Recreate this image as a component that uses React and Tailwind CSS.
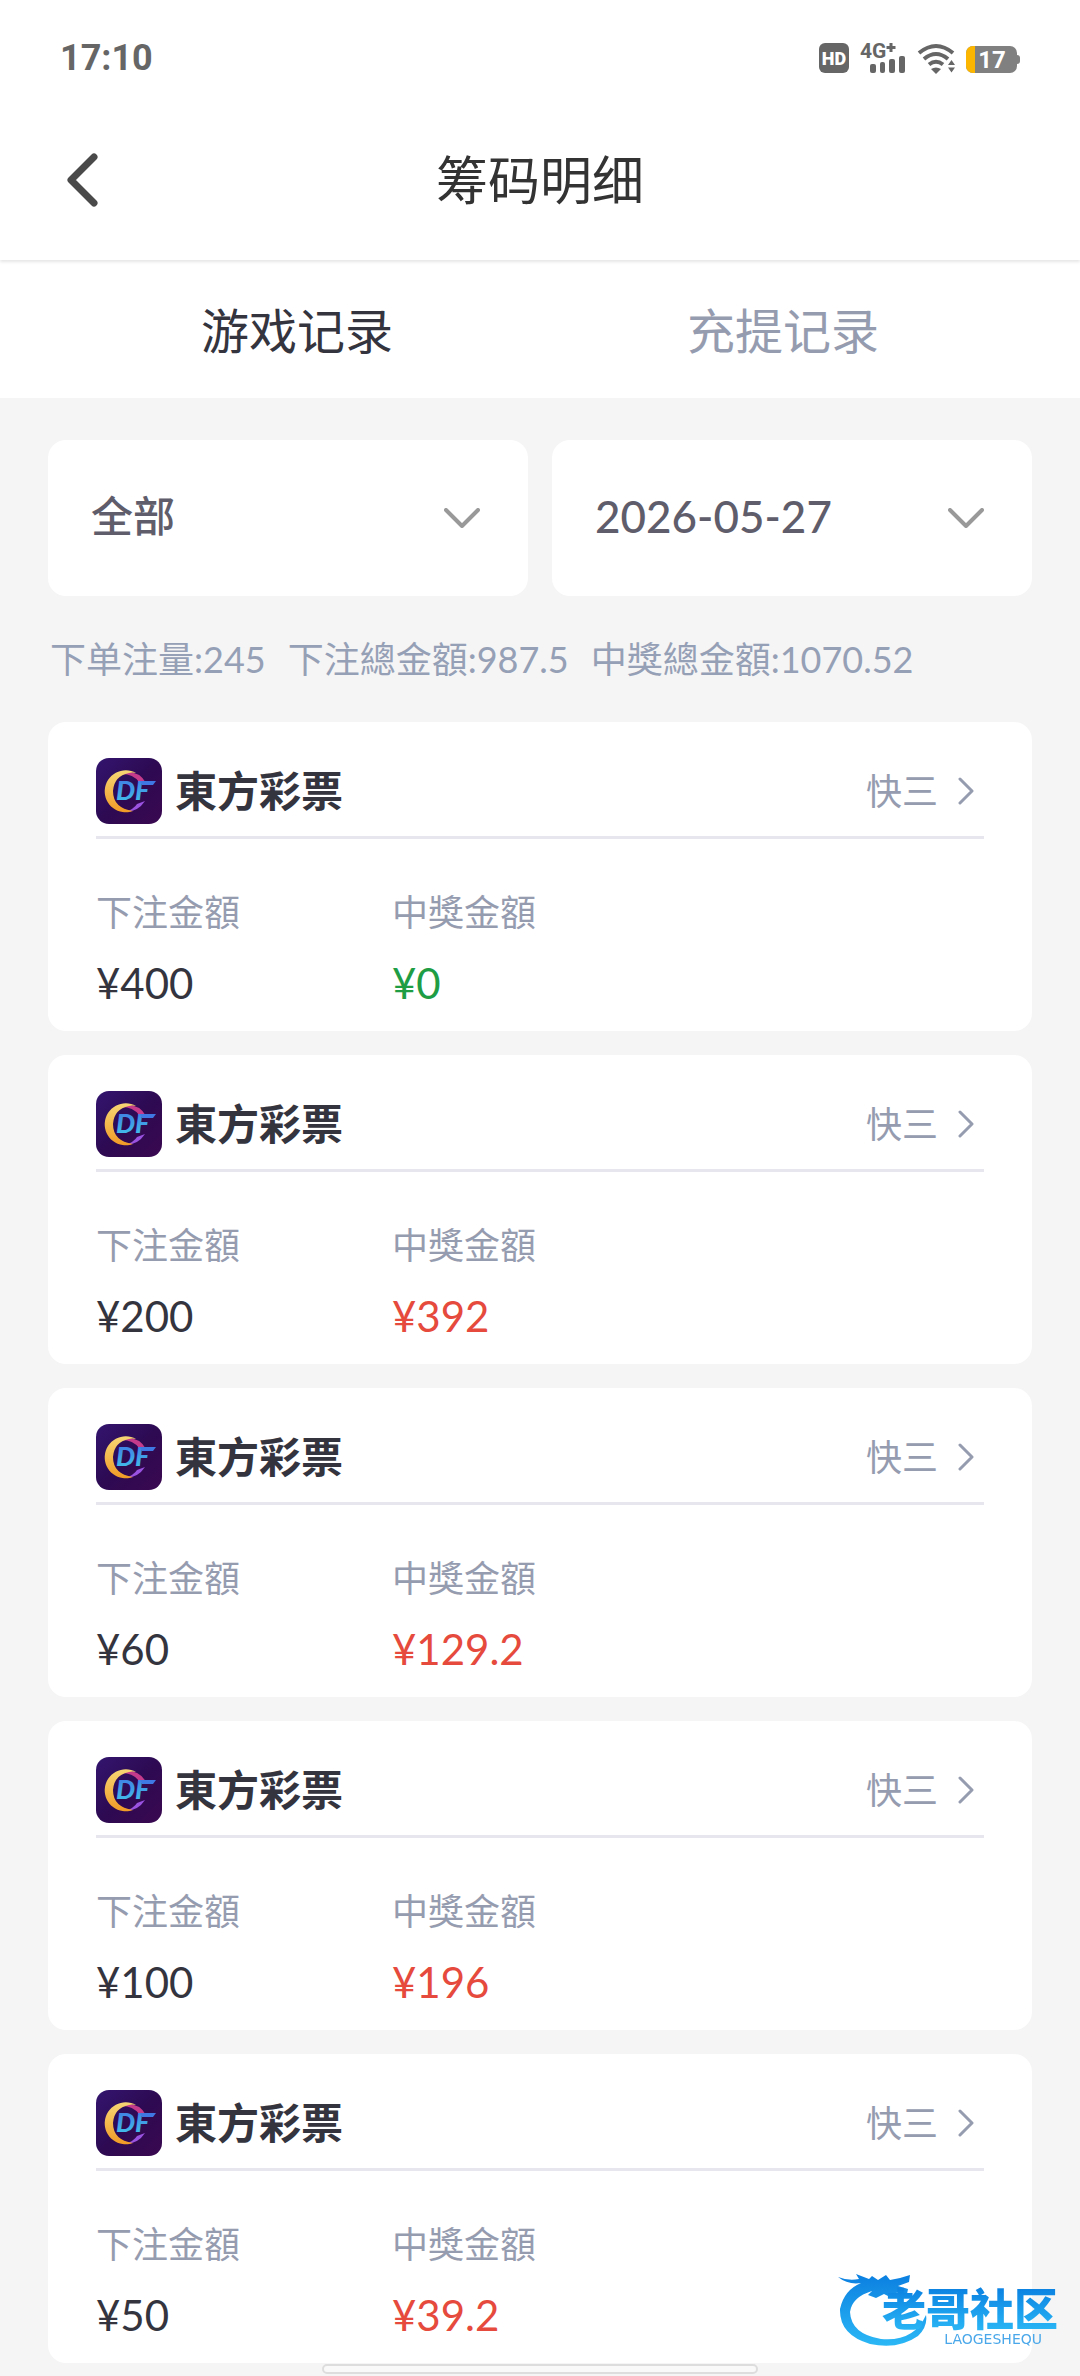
import { useState } from "react";

const records = [
  { id: 1, bet: "¥400", win: "¥0", won: false },
  { id: 2, bet: "¥200", win: "¥392", won: true },
  { id: 3, bet: "¥60", win: "¥129.2", won: true },
  { id: 4, bet: "¥100", win: "¥196", won: true },
  { id: 5, bet: "¥50", win: "¥39.2", won: true },
];

const tabs = ["游戏记录", "充提记录"];

const StatusBar = () => (
  <div className="flex h-[100px] items-center justify-between pt-4 pr-[60px] pl-[60px]">
    <span className="font-['Roboto',sans-serif] text-4xl leading-none font-bold text-[#666]">17:10</span>
    <svg className="h-8 w-[202px] overflow-visible" viewBox="0 0 202 32" fill="#666">
      <rect x="1" y="1" width="30" height="30" rx="6" />
      <text x="16" y="23" fill="#fff" fontSize="18" fontWeight="900" textAnchor="middle" fontFamily="Roboto, sans-serif">
        HD
      </text>
      <text x="42" y="16" fontSize="21" fontWeight="700" fontFamily="Roboto, sans-serif">
        4G
      </text>
      <path d="M73 1v9M68.500 5.500h9" stroke="#666" strokeWidth="3" />
      <rect x="52" y="22" width="6" height="9" rx="2" />
      <rect x="62" y="20" width="5" height="11" rx="2" />
      <rect x="71" y="17" width="6" height="14" rx="2" />
      <rect x="81" y="14" width="6" height="17" rx="2" />
      <g fill="none" stroke="#666" strokeWidth="4">
        <path d="M101 11Q118 -3 135 11" />
        <path d="M106 17Q118 7 130 17" />
        <path d="M111 22.500Q118 17 125 22.500" />
      </g>
      <path d="M113 27Q118 24 123 27L118 32Z" />
      <path d="M130 23l3.500-5 3.500 5zM130 25.500h7l-3.500 5z" />
      <rect x="148" y="4" width="51" height="27" rx="7" fill="#808080" />
      <path d="M157 4v27h-2a7 7 0 0 1-7-7V11a7 7 0 0 1 7-7z" fill="#fdb600" />
      <path d="M199 13q3 0 3 3v3q0 3-3 3z" fill="#808080" />
      <text x="174" y="26" fill="#fff" fontSize="24" fontWeight="700" textAnchor="middle" fontFamily="Roboto, sans-serif">
        17
      </text>
    </svg>
  </div>
);

const Logo = () => (
  <svg className="size-[66px] shrink-0" viewBox="0 0 66 66">
    <defs>
      <linearGradient id="tile" x1="0" y1="0" x2="1" y2="1">
        <stop offset="0" stopColor="#33156f" />
        <stop offset="0.5" stopColor="#2d0a52" />
        <stop offset="1" stopColor="#3a0850" />
      </linearGradient>
      <linearGradient id="gold" x1="0" y1="0" x2="0" y2="1">
        <stop offset="0" stopColor="#f6d674" />
        <stop offset="1" stopColor="#f19a26" />
      </linearGradient>
      <linearGradient id="ice" x1="0" y1="0" x2="0" y2="1">
        <stop offset="0" stopColor="#3f6fe0" />
        <stop offset="1" stopColor="#42c8ec" />
      </linearGradient>
    </defs>
    <rect width="66" height="66" rx="13" fill="url(#tile)" />
    <path d="M26 14Q43 12 50 25L43 24Q37 16 26 16Z" fill="#c43b8c" />
    <path d="M49 43Q42 54 29 54Q38 51 41 46Z" fill="#9a52e0" />
    <path d="M40 15A21 21 0 1 0 37 53Q17 50 17 33Q18 18 33 15Q36 14 40 15Z" fill="url(#gold)" />
    <text x="20" y="42" fill="url(#ice)" fontSize="27" fontWeight="900" fontStyle="italic" fontFamily="Lato, sans-serif">
      D
    </text>
    <text x="39" y="42" fill="url(#ice)" fontSize="27" fontWeight="900" fontStyle="italic" fontFamily="Lato, sans-serif">
      F
    </text>
    <path d="M44 23h16l-3 4H46z" fill="#3f78e2" />
  </svg>
);

const Chevron = ({ className, d, width, viewBox }) => (
  <svg
    className={className}
    viewBox={viewBox}
    fill="none"
    stroke="currentColor"
    strokeWidth={width}
    strokeLinecap="round"
    strokeLinejoin="round"
  >
    <path d={d} />
  </svg>
);

const Filter = ({ label, value, onChange, options, className }) => (
  <label className="relative flex flex-1 items-center rounded-[18px] bg-white">
    <select
      aria-label={label}
      className={`h-[156px] w-full appearance-none rounded-[18px] bg-transparent pb-1 pl-[43px] font-medium text-[#5f5d6b] outline-none ${className}`}
      value={value}
      onChange={(e) => onChange(e.target.value)}
    >
      {options.map((option) => (
        <option key={option}>{option}</option>
      ))}
    </select>
    <Chevron
      className="pointer-events-none absolute right-12 h-5 w-9 text-[#999]"
      viewBox="0 0 36 20"
      d="M2 2L18 18L34 2"
      width={4}
    />
  </label>
);

const RecordCard = ({ record }) => (
  <li className="rounded-[18px] bg-white px-12 pt-9 pb-5">
    <button className="flex w-full items-center border-b-3 border-[#e7e6ee] pb-3 text-left">
      <Logo />
      <span className="ml-[13px] text-[42px] leading-[60px] font-bold text-[#34343e]">東方彩票</span>
      <span className="ml-auto text-4xl text-[#969cb0]">快三</span>
      <Chevron
        className="mr-[10px] ml-5 h-7 w-4 text-[#969cb0]"
        viewBox="0 0 16 28"
        d="M2 2L14 14L2 26"
        width={3}
      />
    </button>
    <dl className="grid grid-cols-3 pt-[46px]">
      <div>
        <dt className="text-4xl leading-[54px] text-[#969cb0]">下注金額</dt>
        <dd className="mt-4 text-[42px] leading-[56px] text-[#34343e]">{record.bet}</dd>
      </div>
      <div>
        <dt className="text-4xl leading-[54px] text-[#969cb0]">中獎金額</dt>
        <dd className={`mt-4 text-[42px] leading-[56px] ${record.won ? "text-[#e54a3c]" : "text-[#1f9d45]"}`}>
          {record.win}
        </dd>
      </div>
    </dl>
  </li>
);

const Watermark = () => (
  <div className="pointer-events-none fixed right-5 bottom-7 h-[76px] w-[224px]">
    <svg className="absolute inset-0 h-full w-full" viewBox="0 0 224 76">
      <defs>
        <linearGradient id="dragon" x1="0" y1="0" x2="0" y2="1">
          <stop offset="0" stopColor="#0b7fe0" />
          <stop offset="1" stopColor="#2bb8f6" />
        </linearGradient>
      </defs>
      <path
        fill="url(#dragon)"
        d="M2 5Q12 9 23 7L20 2L33 7L36 4L42 8L50 3L54 8L64 6L74 3L73 10L62 14L72 17L71 22L62 20L54 25L48 22L40 26L32 23L36 19Q16 25 14 40Q15 62 45 67Q78 70 90 43Q92 54 82 64Q62 78 34 72Q3 63 4 37Q8 18 25 11Q12 13 2 5Z"
      />
    </svg>
    <div className="absolute top-[14px] left-[46px] flex flex-col">
      <span className="bg-linear-to-b from-[#0b7fe0] to-[#2bb8f6] bg-clip-text text-[44px] leading-[46px] font-black text-transparent">
        老哥社区
      </span>
      <span className="self-end pr-4 font-['DejaVu_Sans',sans-serif] text-sm leading-[14px] text-[#4aa8ea]">
        LAOGESHEQU
      </span>
    </div>
  </div>
);

export default function App() {
  const [tab, setTab] = useState(tabs[0]);
  const [type, setType] = useState("全部");
  const [date, setDate] = useState("2026-05-27");

  return (
    <div className="min-h-screen bg-[#f5f5f5] font-['Lato','Noto_Sans_CJK_SC',sans-serif]">
      <header className="relative bg-white shadow-[0_2px_3px_rgba(0,0,0,0.1)]">
        <StatusBar />
        <div className="grid h-40 grid-cols-[1fr_auto_1fr] items-center">
          <button aria-label="返回" className="ml-[65px] w-fit text-[#4a4a4a]">
            <Chevron className="h-[54px] w-[34px]" viewBox="0 0 34 54" d="M29 4L6 27L29 50" width={7} />
          </button>
          <h1 className="text-[52px] leading-[72px] text-[#333]">筹码明细</h1>
        </div>
      </header>

      <nav className="grid h-[138px] grid-cols-2 bg-white px-[54px]">
        {tabs.map((name) => (
          <button
            key={name}
            className={`pt-1 text-5xl ${tab === name ? "text-[#34343e]" : "text-[#969cb0]"}`}
            onClick={() => setTab(name)}
          >
            {name}
          </button>
        ))}
      </nav>

      <main className="px-12 pt-[42px] pb-[13px]">
        <div className="flex gap-6">
          <Filter label="类型" className="text-[42px]" value={type} onChange={setType} options={["全部", "快三"]} />
          <Filter
            label="日期"
            className="text-[44px]"
            value={date}
            onChange={setDate}
            options={["2026-05-27", "2026-05-26"]}
          />
        </div>
        <p className="flex gap-[22px] pt-9 pb-9 pl-[2px] text-4xl leading-[54px] whitespace-nowrap text-[#95a0b6]">
          <span>下单注量:245</span>
          <span>下注總金額:987.5</span>
          <span>中獎總金額:1070.52</span>
        </p>
        <ul className="flex flex-col gap-6">
          {records.map((record) => (
            <RecordCard key={record.id} record={record} />
          ))}
        </ul>
      </main>

      <Watermark />
      <div className="fixed bottom-[2px] left-1/2 h-[10px] w-[436px] -translate-x-1/2 rounded-full border-2 border-[#ddd] bg-[#f9f9f9]" />
    </div>
  );
}
